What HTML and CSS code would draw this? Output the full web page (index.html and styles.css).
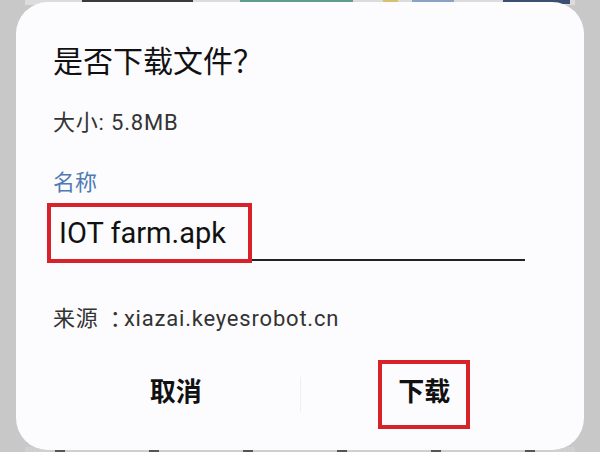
FILE: index.html
```html
<!DOCTYPE html>
<html lang="zh-CN">
<head>
    <meta charset="UTF-8">
    <meta name="viewport" content="width=device-width, initial-scale=1.0">
    <title>是否下载文件?</title>
    <link rel="stylesheet" href="styles.css">
</head>
<body>

    <div class="backdrop">
        <div class="peek-row">
            <span class="peek peek-text"></span>
            <span class="peek peek-green"></span>
            <span class="peek peek-yellow"></span>
            <span class="peek peek-blue"></span>
            <span class="peek peek-navy"></span>
        </div>
        <div class="peek-row peek-bottom">
            <span class="mark"></span>
            <span class="mark"></span>
            <span class="mark"></span>
            <span class="mark"></span>
            <span class="mark"></span>
            <span class="mark"></span>
        </div>
    </div>

    <div class="dialog">
        <div class="dialog-title">是否下载文件？</div>
        <div class="info">大小: 5.8MB</div>
        <div class="field-label">名称</div>
        <div class="field">
            <span class="field-box">IOT farm.apk</span>
        </div>
        <div class="info source">来源 <span class="colon">：</span>xiazai.keyesrobot.cn</div>
        <div class="actions">
            <div class="action">
                <span class="action-label">取消</span>
            </div>
            <div class="divider"></div>
            <div class="action">
                <span class="action-label marked">下载</span>
            </div>
        </div>
    </div>

</body>
</html>
```

FILE: styles.css
```css
body {
    margin: 0;
    height: 452px;
    overflow: hidden;
    background: #c8c8c8;
    font-family: Roboto, "Noto Sans CJK SC", sans-serif;
    color: #111;
}
.backdrop {
    height: 452px;
    display: flex;
    flex-direction: column;
    justify-content: space-between;
}
.peek-row {
    display: flex;
    align-items: flex-start;
    height: 5px;
    padding-left: 57px;
    margin: 0 25px;
    background: #dcdcdc;
}
.peek {
    display: block;
    height: 4px;
}
.peek-text {
    width: 111px;
    background: #3a3a3a;
    margin-right: 47px;
}
.peek-green {
    width: 113px;
    background: #5e9e8c;
    margin-right: 30px;
}
.peek-yellow {
    width: 15px;
    background: #d8c070;
    margin-right: 14px;
}
.peek-blue {
    width: 42px;
    background: #8aa2c4;
    margin-right: 49px;
}
.peek-navy {
    width: 67px;
    background: #3c4f72;
}
.peek-bottom {
    align-items: flex-end;
    justify-content: space-between;
    padding: 0 40px 0 30px;
    background: #cfcfcf;
}
.mark {
    display: block;
    width: 10px;
    height: 2px;
    background: #555;
}
.dialog {
    position: absolute;
    top: 2px;
    left: 16px;
    width: 568px;
    box-sizing: border-box;
    padding: 42px 59px 21px 37px;
    background: #fcfcfe;
    border-radius: 32px;
}
.dialog-title {
    font-size: 30px;
    line-height: 36px;
    color: #111;
}
.info {
    margin-top: 29px;
    font-size: 22px;
    line-height: 28px;
    letter-spacing: 0.8px;
    color: #333;
}
.field-label {
    margin-top: 32px;
    font-size: 22px;
    line-height: 28px;
    color: #4f7bb4;
}
.field {
    display: flex;
    align-items: flex-start;
    height: 56px;
    margin: 6px 0 0 -6px;
    border-bottom: 2px solid #222;
}
.field-box {
    display: block;
    padding: 8px 22px 8px 8px;
    font-size: 29px;
    line-height: 36px;
    color: #111;
    background: #fcfcfe;
    border: 4px solid #d7212b;
}
.source {
    margin-top: 41px;
}
.colon {
    margin-left: 5px;
    font-family: "Noto Sans CJK JP", sans-serif;
    letter-spacing: -8px;
}
.actions {
    display: flex;
    align-items: center;
    margin: 27px -23px 0 -1px;
}
.action {
    flex: 1;
    display: flex;
    justify-content: center;
}
.action-label {
    display: block;
    padding: 12px 16px 16px;
    font-size: 26px;
    line-height: 33px;
    font-weight: bold;
    color: #111;
    border: 4px solid transparent;
}
.action-label.marked {
    border-color: #d7212b;
}
.divider {
    width: 1px;
    height: 35px;
    background: #efeff1;
}
```
